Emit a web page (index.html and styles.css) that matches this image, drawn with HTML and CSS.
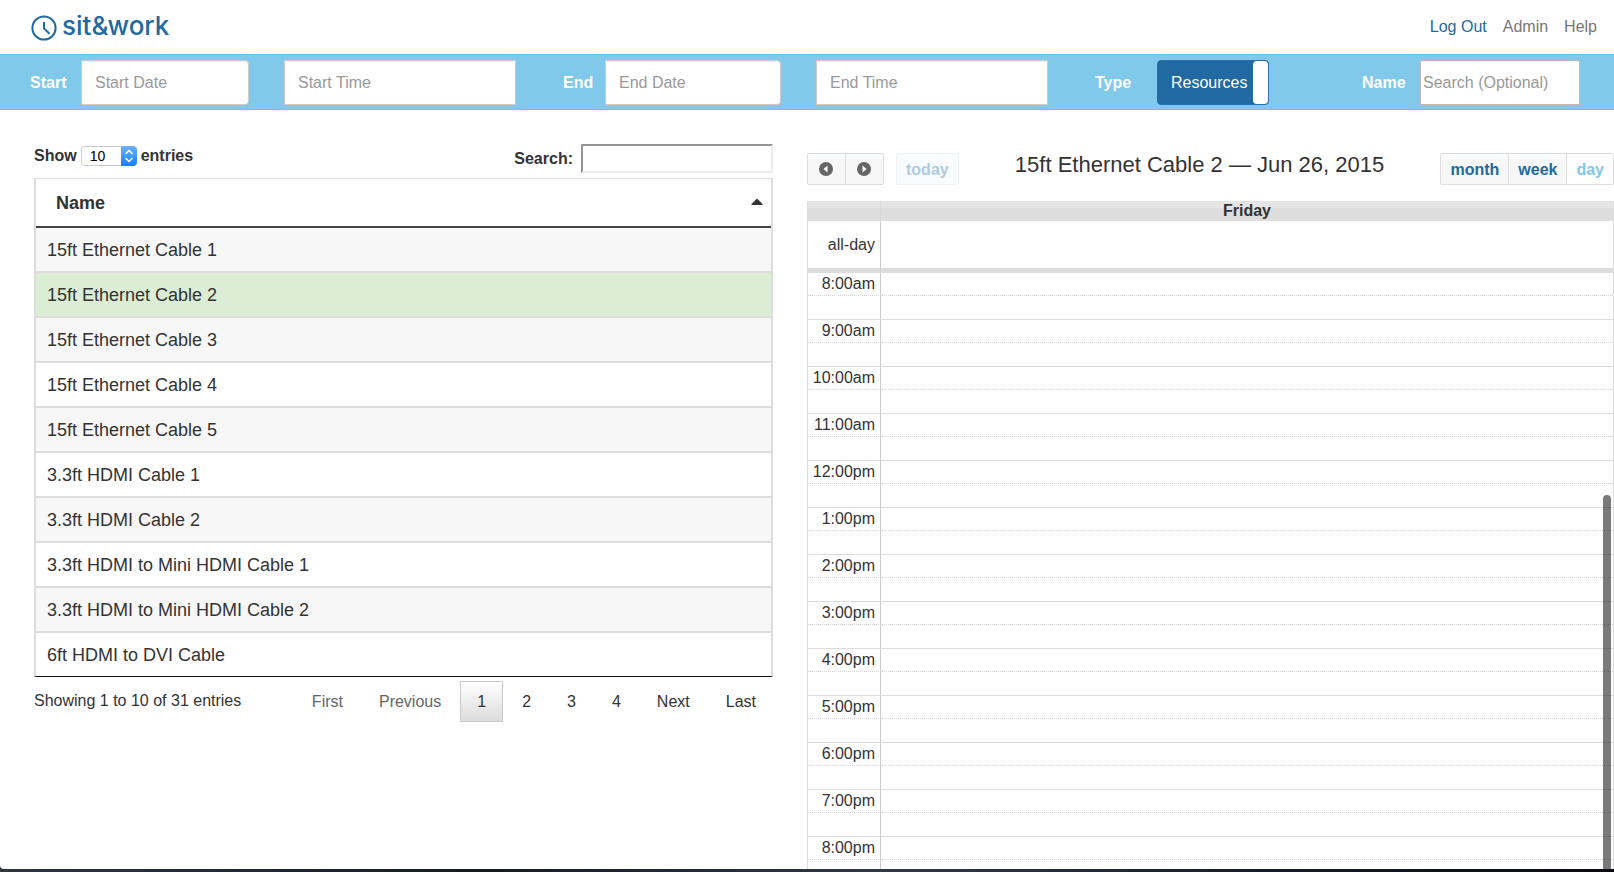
FILE: index.html
```html
<!DOCTYPE html>
<html lang="en">
<head>
<meta charset="utf-8">
<title>sit&amp;work</title>
<link rel="stylesheet" href="styles.css">
</head>
<body>
<div class="window">
  <header class="topbar">
    <a class="brand" href="#">
      <svg class="brand-icon" viewBox="0 0 26 26" aria-hidden="true">
        <circle cx="13" cy="13" r="11.6"/>
        <path d="M13 7v6.400l5.500 5.400"/>
      </svg>
      <span>sit&amp;work</span>
    </a>
    <nav class="links">
      <a class="active" href="#">Log Out</a>
      <a href="#">Admin</a>
      <a href="#">Help</a>
    </nav>
  </header>

  <form class="filters">
    <label for="start-date">Start</label>
    <input class="field date" id="start-date" type="text" placeholder="Start Date">
    <input class="field time" type="text" placeholder="Start Time" aria-label="Start Time">
    <label class="next" for="end-date">End</label>
    <input class="field date" id="end-date" type="text" placeholder="End Date">
    <input class="field time" type="text" placeholder="End Time" aria-label="End Time">
    <label class="next" for="type">Type</label>
    <button class="toggle" id="type" type="button"><span>Resources</span><i class="knob"></i></button>
    <label class="last" for="name">Name</label>
    <input class="field name" id="name" type="text" placeholder="Search (Optional)">
  </form>

  <main class="content">
    <section class="resources">
      <div class="controls">
        <div class="length">
          <label for="length">Show</label>
          <span class="select">
            <select id="length"><option>10</option><option>25</option><option>50</option></select>
            <svg class="stepper" viewBox="0 0 16 20" aria-hidden="true"><path d="M4.500 8 8 4.500 11.500 8M4.500 12 8 15.500 11.500 12"/></svg>
          </span>
          <b>entries</b>
        </div>
        <div class="search">
          <label for="search">Search:</label>
          <input id="search" type="search">
        </div>
      </div>
      <table class="list">
        <thead><tr><th><div class="sort">Name<svg viewBox="0 0 12 8" aria-hidden="true"><path d="M6 0.500 11.500 6v1H0.500V6z"/></svg></div></th></tr></thead>
        <tbody>
          <tr><td>15ft Ethernet Cable 1</td></tr>
          <tr class="selected"><td>15ft Ethernet Cable 2</td></tr>
          <tr><td>15ft Ethernet Cable 3</td></tr>
          <tr><td>15ft Ethernet Cable 4</td></tr>
          <tr><td>15ft Ethernet Cable 5</td></tr>
          <tr><td>3.3ft HDMI Cable 1</td></tr>
          <tr><td>3.3ft HDMI Cable 2</td></tr>
          <tr><td>3.3ft HDMI to Mini HDMI Cable 1</td></tr>
          <tr><td>3.3ft HDMI to Mini HDMI Cable 2</td></tr>
          <tr><td>6ft HDMI to DVI Cable</td></tr>
        </tbody>
      </table>
      <div class="footer">
        <p>Showing 1 to 10 of 31 entries</p>
        <nav class="pages">
          <button type="button" disabled>First</button>
          <button type="button" disabled>Previous</button>
          <button type="button" class="current">1</button>
          <button type="button">2</button>
          <button type="button">3</button>
          <button type="button">4</button>
          <button type="button">Next</button>
          <button type="button">Last</button>
        </nav>
      </div>
    </section>

    <section class="calendar">
      <div class="toolbar">
        <div class="left">
          <div class="group arrows">
            <button type="button" aria-label="Previous day"><svg viewBox="0 0 14 14"><circle cx="7" cy="7" r="7"/><path d="M8.500 3.500v7L4.500 7z"/></svg></button>
            <button type="button" aria-label="Next day"><svg viewBox="0 0 14 14"><circle cx="7" cy="7" r="7"/><path d="M5.500 3.500v7L9.500 7z"/></svg></button>
          </div>
          <div class="group today"><button type="button" disabled>today</button></div>
        </div>
        <h2>15ft Ethernet Cable 2 — Jun 26, 2015</h2>
        <div class="group views">
          <button type="button">month</button>
          <button type="button">week</button>
          <button type="button" class="on">day</button>
        </div>
      </div>
      <table class="grid">
        <thead><tr><th class="axis"></th><th>Friday</th></tr></thead>
        <tbody class="allday"><tr><td class="axis">all-day</td><td></td></tr></tbody>
        <tbody class="slots">
          <tr><td class="axis">8:00am</td><td></td></tr><tr class="half"><td class="axis"></td><td></td></tr>
          <tr><td class="axis">9:00am</td><td></td></tr><tr class="half"><td class="axis"></td><td></td></tr>
          <tr><td class="axis">10:00am</td><td></td></tr><tr class="half"><td class="axis"></td><td></td></tr>
          <tr><td class="axis">11:00am</td><td></td></tr><tr class="half"><td class="axis"></td><td></td></tr>
          <tr><td class="axis">12:00pm</td><td></td></tr><tr class="half"><td class="axis"></td><td></td></tr>
          <tr><td class="axis">1:00pm</td><td></td></tr><tr class="half"><td class="axis"></td><td></td></tr>
          <tr><td class="axis">2:00pm</td><td></td></tr><tr class="half"><td class="axis"></td><td></td></tr>
          <tr><td class="axis">3:00pm</td><td></td></tr><tr class="half"><td class="axis"></td><td></td></tr>
          <tr><td class="axis">4:00pm</td><td></td></tr><tr class="half"><td class="axis"></td><td></td></tr>
          <tr><td class="axis">5:00pm</td><td></td></tr><tr class="half"><td class="axis"></td><td></td></tr>
          <tr><td class="axis">6:00pm</td><td></td></tr><tr class="half"><td class="axis"></td><td></td></tr>
          <tr><td class="axis">7:00pm</td><td></td></tr><tr class="half"><td class="axis"></td><td></td></tr>
          <tr><td class="axis">8:00pm</td><td></td></tr><tr class="half"><td class="axis"></td><td></td></tr>
        </tbody>
      </table>
      <div class="scrollbar"></div>
    </section>
  </main>
</div>
</body>
</html>
```
FILE: styles.css
```css
* { box-sizing: border-box; }

body {
  margin: 0;
  height: 100vh;
  padding-bottom: 3px;
  overflow: hidden;
  background: linear-gradient(90deg, #30343f, #171b22 30%, #343746 55%, #171a24 80%, #090b10);
  color: #333;
  font: 16px/23px "Liberation Sans", Arial, sans-serif;
}

button, input, select { font: inherit; color: inherit; margin: 0; }
a { text-decoration: none; color: #777; }
label { font-weight: bold; }

.window {
  display: flex;
  flex-direction: column;
  height: 100%;
  overflow: hidden;
  background: #fff;
  border-bottom-left-radius: 4px;
}

.topbar {
  display: flex;
  align-items: center;
  justify-content: space-between;
  height: 54px;
  flex: none;
  padding: 0 17px 2px 31px;
}
.brand {
  display: flex;
  align-items: center;
  gap: 5px;
  color: #2169a1;
  font: 500 26px/28px Inter, sans-serif;
}
.brand-icon {
  width: 26px;
  height: 26px;
  margin-top: 3px;
  fill: none;
  stroke: #2169a1;
  stroke-width: 2;
}
.links { display: flex; gap: 16px; }
.links .active { color: #2169a1; }

.filters {
  display: grid;
  grid-template-columns: 51px 168fr 267fr 89px 176fr 267fr 109px 112px 151px 160fr;
  align-items: center;
  flex: none;
  height: 56px;
  padding: 0 34px 0 30px;
  background: #80c9ea;
  border: solid #6dc1e7;
  border-width: 1px 0;
  color: #fff;
}
.next { padding-left: 47px; }
.last { padding-left: 93px; }
.field {
  width: 100%;
  min-width: 0;
  height: 45px;
  padding: 2px 13px 0;
  background: #fff;
  border: 1px solid #ccc;
  box-shadow: inset 0 1px 1px rgba(0, 0, 0, 0.08);
  color: #555;
}
.field::placeholder { color: #999; opacity: 1; }
.date { border-radius: 0 4px 4px 0; }
.time { width: auto; margin-left: 35px; }
.name { padding: 2px 2px 0; border-color: #bbb; }
.toggle {
  display: flex;
  justify-content: space-between;
  align-items: center;
  height: 45px;
  padding: 0 0 0 13px;
  background: #2169a1;
  border: 1px solid #2b70a8;
  border-radius: 4px;
}
.knob {
  width: 15px;
  height: 43px;
  background: #fff;
  border-radius: 4px;
}

.content {
  display: grid;
  grid-template-columns: 1fr 1fr;
  flex: 1;
  min-height: 0;
}

.resources { padding: 34px 34px 0; }
.controls {
  display: flex;
  justify-content: space-between;
  height: 34px;
}
.length { display: flex; gap: 4px; align-items: flex-start; }
.select { position: relative; display: block; margin-top: 2px; }
.select select {
  display: block;
  width: 56px;
  height: 20px;
  padding: 0 8px;
  appearance: none;
  background: #fff;
  border: 1px solid #ccc;
  border-radius: 4px;
  color: #000;
  font-size: 14px;
  line-height: 18px;
}
.stepper {
  position: absolute;
  top: 0;
  right: 0;
  width: 16px;
  height: 20px;
  background: linear-gradient(#6cb3fa, #157efb);
  border-radius: 0 4px 4px 0;
  fill: none;
  stroke: #fff;
  stroke-width: 1.500;
  pointer-events: none;
}
.search { display: flex; align-items: center; gap: 8px; height: 29px; }
.search input {
  width: 192px;
  height: 29px;
  padding: 0 4px;
  appearance: none;
  background: #fff;
  border: 2px solid;
  border-color: #949494 #eee #eee #949494;
}

.list {
  width: 100%;
  border-collapse: separate;
  border-spacing: 0;
  border: 2px solid #ddd;
  border-width: 1px 2px 1px;
  border-bottom-color: #111;
  font-size: 18px;
}
.list th {
  height: 49px;
  padding: 2px 8px 0 20px;
  border-bottom: 2px solid #444;
  text-align: left;
}
.sort { display: flex; align-items: center; justify-content: space-between; }
.sort svg { width: 12px; height: 8px; margin-bottom: 4px; fill: #333; }
.list td { height: 45px; padding: 2px 11px 0; border-bottom: 2px solid #ddd; }
.list tbody tr:last-child td { border-bottom: 0; height: 43px; }
.list tbody tr:nth-child(odd) { background: #f7f7f7; }
.list tbody tr.selected { background: #dbeed5; }

.footer { display: flex; justify-content: space-between; }
.footer p { margin: 12px 0 0; }
.pages { display: flex; gap: 2px; padding-top: 4px; }
.pages button {
  height: 41px;
  padding: 0 16px;
  background: none;
  border: 1px solid transparent;
}
.pages button:disabled { color: #666; }
.pages .current {
  border-color: #cacaca;
  background: linear-gradient(#fff, #dcdcdc);
}

.calendar { position: relative; padding-top: 43px; overflow: hidden; }
.toolbar { display: flex; justify-content: space-between; height: 48px; }
.toolbar h2 { margin: 0; font-size: 22px; line-height: 24px; font-weight: normal; }
.left { display: flex; gap: 12px; }
.group {
  display: flex;
  height: 32px;
  border: 1px solid #ddd;
  border-radius: 2px;
  overflow: hidden;
}
.group button {
  padding: 0 9px;
  border: 0;
  background: linear-gradient(#fafcff 15%, #f7f7f7 15%);
  color: #2169a1;
  font-weight: bold;
}
.group button + button { border-left: 1px solid #ddd; }
.arrows button { width: 37px; padding: 0 11px; }
.arrows button + button { width: 38px; }
.arrows svg { display: block; width: 14px; height: 14px; fill: #666; }
.arrows path { fill: #fff; }
.today { border-color: #eef3f7; }
.group button:disabled { background: #f9fcff; color: #aecbe0; }
.group .on { background: #fff; color: #80c9ea; }

.grid {
  width: 100%;
  table-layout: fixed;
  border-collapse: separate;
  border-spacing: 0;
  border: 1px solid #ddd;
  border-width: 0 1px;
}
.grid th {
  height: 20px;
  padding: 0;
  line-height: 20px;
  background: linear-gradient(#e5e5e5 7px, #ddd 7px);
}
.grid td { padding: 0; }
.grid .axis {
  width: 73px;
  padding-right: 5px;
  border-right: 1px solid #ccc;
  text-align: right;
}
.grid th.axis { border-right-color: #d9d9d9; }
.allday td { height: 51px; border-bottom: 4px solid #ddd; }
.slots td { height: 23px; border-top: 1px solid #ddd; line-height: 22px; }
.slots .half td { height: 24px; border-top: 1px dotted #d4d4d4; }

.scrollbar {
  position: absolute;
  top: 385px;
  right: 3px;
  bottom: 0;
  width: 8px;
  background: rgba(0, 0, 0, 0.52);
  border-radius: 4px 4px 0 0;
}
```
